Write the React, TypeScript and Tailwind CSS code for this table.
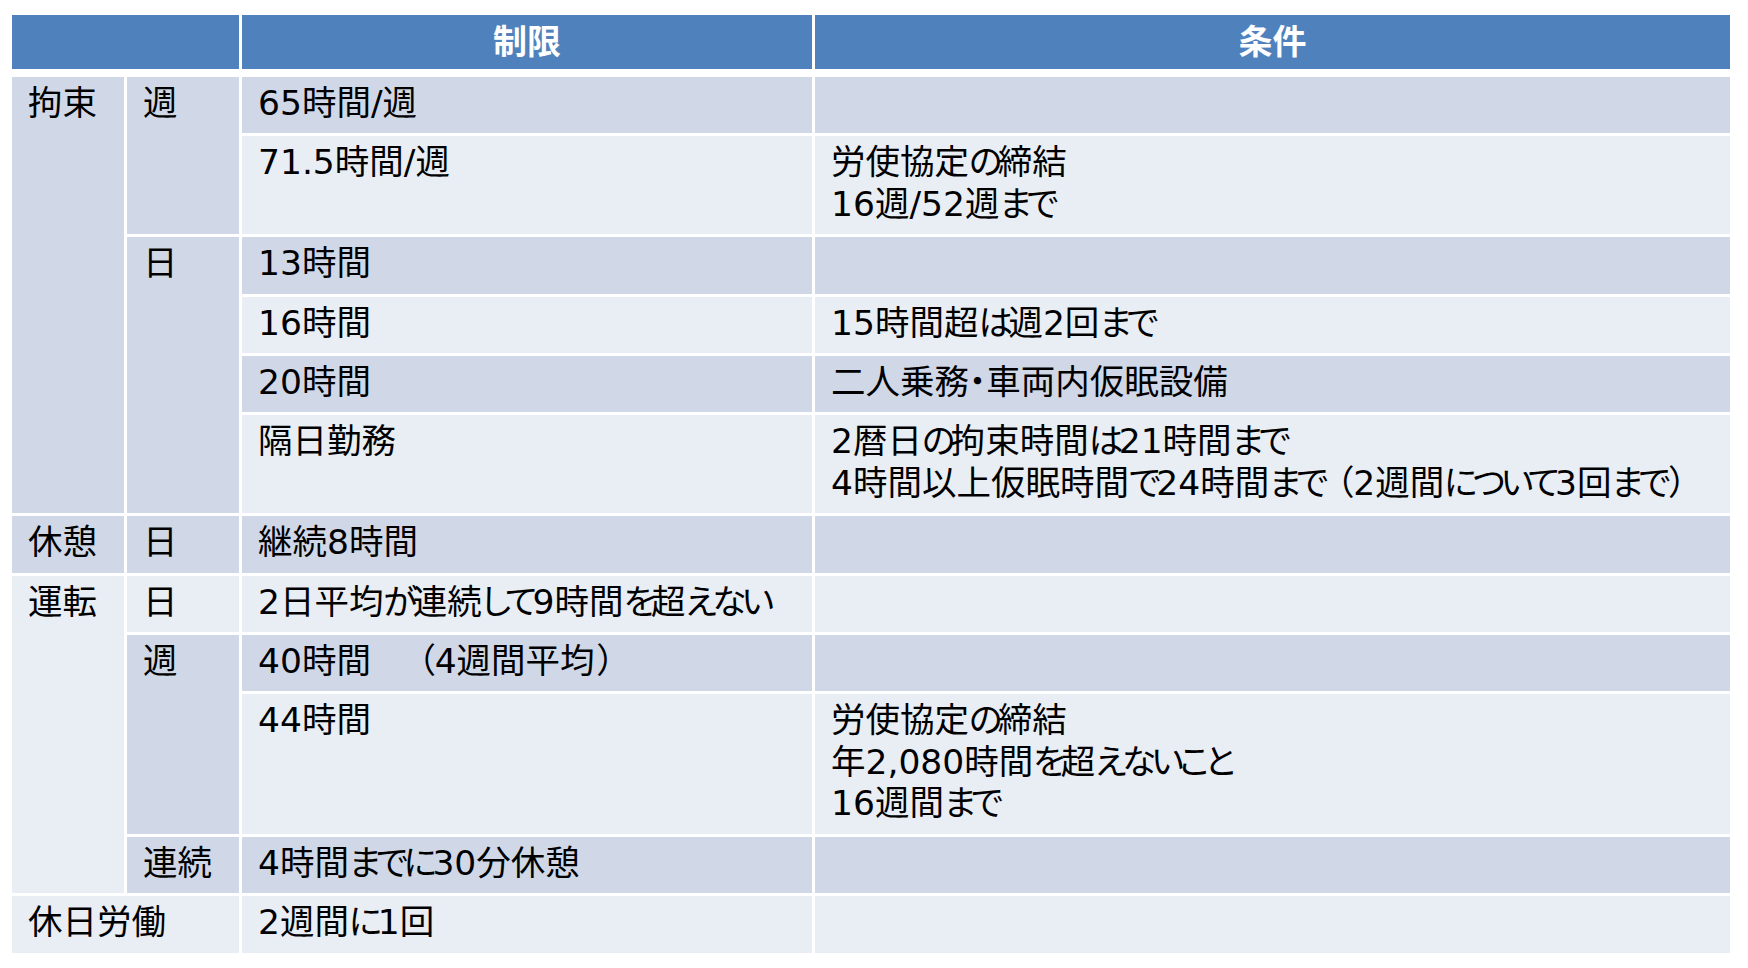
import React from 'react';

type Tone = 'dark' | 'light';

type Cell = {
  lines: string[];
  tone: Tone;
  span?: string;
};

const toneClass: Record<Tone, string> = {
  dark: 'bg-[#d0d8e8]',
  light: 'bg-[#e9edf4]',
};

// 行ごとの帯色（結合セルは先頭行の色を引き継ぐ）
const cells: Cell[] = [
  { lines: ['拘束'], tone: 'dark', span: 'row-span-6' },
  { lines: ['週'], tone: 'dark', span: 'row-span-2' },
  { lines: ['65時間/週'], tone: 'dark' },
  { lines: [], tone: 'dark' },
  { lines: ['71.5時間/週'], tone: 'light' },
  { lines: ['労使協定の締結', '16週/52週まで'], tone: 'light' },
  { lines: ['日'], tone: 'dark', span: 'row-span-4' },
  { lines: ['13時間'], tone: 'dark' },
  { lines: [], tone: 'dark' },
  { lines: ['16時間'], tone: 'light' },
  { lines: ['15時間超は週2回まで'], tone: 'light' },
  { lines: ['20時間'], tone: 'dark' },
  { lines: ['二人乗務・車両内仮眠設備'], tone: 'dark' },
  { lines: ['隔日勤務'], tone: 'light' },
  {
    lines: ['2暦日の拘束時間は21時間まで', '4時間以上仮眠時間で24時間まで（2週間について3回まで）'],
    tone: 'light',
  },
  { lines: ['休憩'], tone: 'dark' },
  { lines: ['日'], tone: 'dark' },
  { lines: ['継続8時間'], tone: 'dark' },
  { lines: [], tone: 'dark' },
  { lines: ['運転'], tone: 'light', span: 'row-span-4' },
  { lines: ['日'], tone: 'light' },
  { lines: ['2日平均が連続して9時間を超えない'], tone: 'light' },
  { lines: [], tone: 'light' },
  { lines: ['週'], tone: 'dark', span: 'row-span-2' },
  { lines: ['40時間　（4週間平均）'], tone: 'dark' },
  { lines: [], tone: 'dark' },
  { lines: ['44時間'], tone: 'light' },
  { lines: ['労使協定の締結', '年2,080時間を超えないこと', '16週間まで'], tone: 'light' },
  { lines: ['連続'], tone: 'dark' },
  { lines: ['4時間までに30分休憩'], tone: 'dark' },
  { lines: [], tone: 'dark' },
  { lines: ['休日労働'], tone: 'light', span: 'col-span-2' },
  { lines: ['2週間に1回'], tone: 'light' },
  { lines: [], tone: 'light' },
];

// ひらがなは詰め気味、全角かっこは少し広めに
function renderLine(line: string) {
  const parts = line.split(/([\u3041-\u309f]+|（|）)/).filter(Boolean);
  return parts.map((part, k) => {
    if (/^[\u3041-\u309f]+$/.test(part)) {
      return (
        <span key={k} className="tracking-[-4.5px]">
          {part}
        </span>
      );
    }
    if (part === '（') {
      return (
        <span key={k} className="ml-[12px]">
          {part}
        </span>
      );
    }
    if (part === '）') {
      return (
        <span key={k} className="ml-[3px]">
          {part}
        </span>
      );
    }
    return <React.Fragment key={k}>{part}</React.Fragment>;
  });
}

export default function App() {
  return (
    <div className="min-h-screen bg-white pl-[12px] pt-[15px] font-['DejaVu_Sans','Noto_Sans_CJK_JP',sans-serif] text-[34.5px] text-black [font-feature-settings:'palt']">
      <div className="grid w-max grid-cols-[112px_112px_570px_915px] gap-[3px]">
        <div className="col-span-2 h-[54px] bg-[#4f81bd]" />
        <div className="flex h-[54px] items-center justify-center bg-[#4f81bd] text-[34px] font-bold text-white">制限</div>
        <div className="flex h-[54px] items-center justify-center bg-[#4f81bd] text-[34px] font-bold text-white">条件</div>
      </div>
      <div className="mt-[8px] grid w-max grid-cols-[112px_112px_570px_915px] gap-[3px]">
        {cells.map((cell, i) => (
          <div
            key={i}
            className={`${toneClass[cell.tone]} ${cell.span ?? ''} pb-[9px] pl-4 pr-2 pt-[6px] leading-[41.4px]`}
          >
            {cell.lines.length ? (
              cell.lines.map((line, j) => (
                <div key={j} className="whitespace-nowrap">
                  {renderLine(line)}
                </div>
              ))
            ) : (
              <div>&nbsp;</div>
            )}
          </div>
        ))}
      </div>
    </div>
  );
}
